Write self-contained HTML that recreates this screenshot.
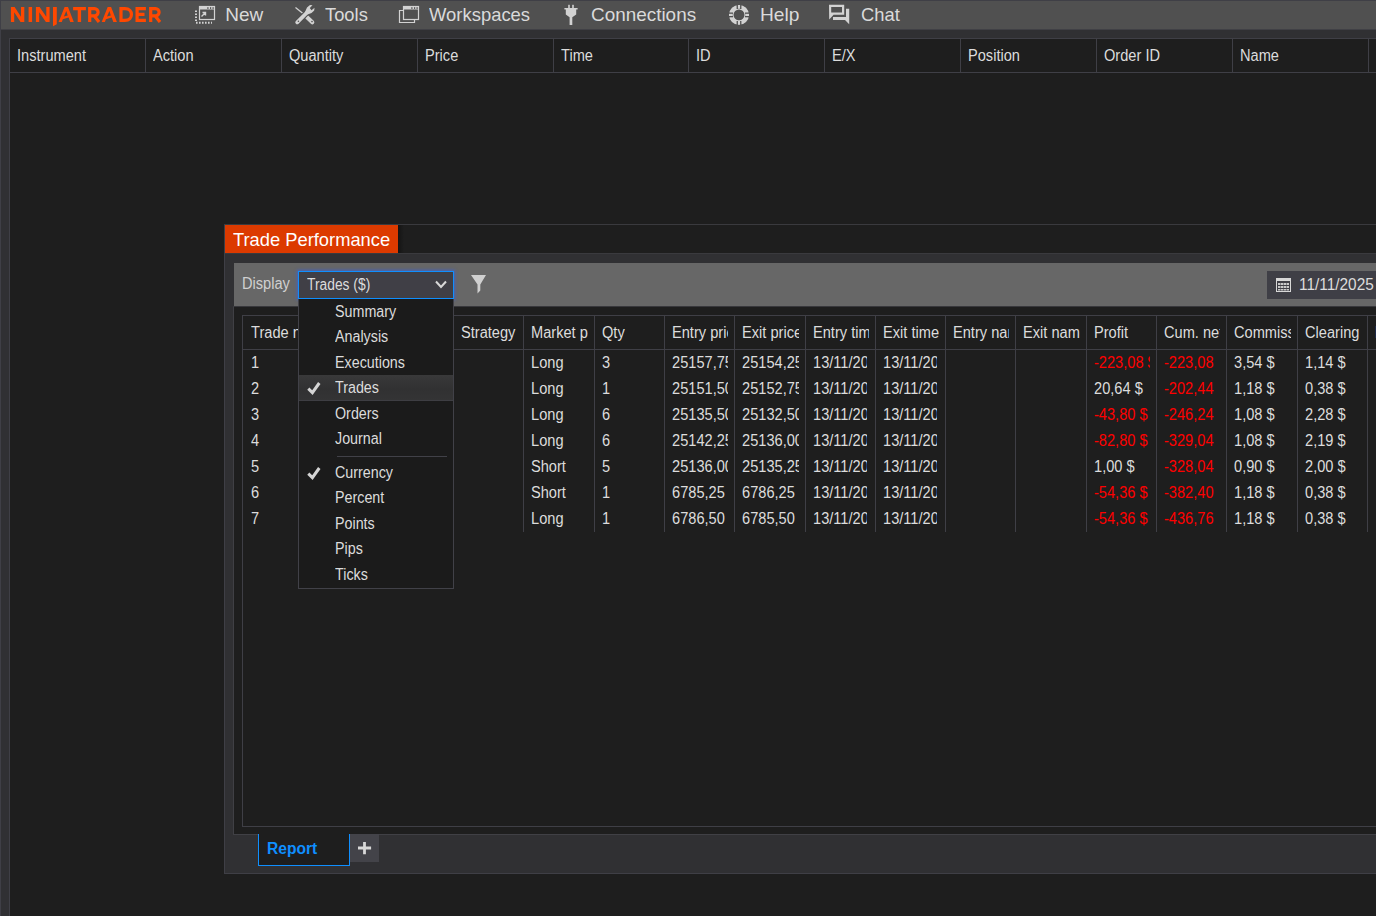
<!DOCTYPE html>
<html><head><meta charset="utf-8">
<style>
*{margin:0;padding:0;box-sizing:border-box}
html,body{width:1376px;height:916px;overflow:hidden;background:#1e1e1e;font-family:"Liberation Sans",sans-serif;color:#dcdcdc;position:relative}
.a{position:absolute}
.t{position:absolute;white-space:nowrap;line-height:1}
svg{display:block}
</style></head><body>
<div class="a" style="left:0px;top:0px;width:10px;height:916px;background:#303033;border-left:1px solid #3f3f46"></div>
<div class="a" style="left:9px;top:38px;width:1px;height:878px;background:#3f3f46"></div>
<div class="a" style="left:10px;top:30px;width:1366px;height:8px;background:#303033"></div>
<div class="a" style="left:0px;top:0px;width:1376px;height:30px;background:#505050;border-top:1px solid #3f3f46;border-left:1px solid #3f3f46;border-bottom:1px solid #404045"></div>
  <svg class="a" style="left:0;top:0" width="180" height="30" viewBox="0 0 180 30">
   <g fill="none" stroke="#ff4800" stroke-width="3.2" stroke-linejoin="miter">
    <path d="M121 8.6 H125 C133.6 8.6 133.6 20.4 125 20.4 H121 Z"/>
    <path d="M145.9 8.6 H137.1 V20.4 H145.9 M137.1 14.4 H144.5"/>
    <path d="M89.7 22 V8.6 H94.5 A3.6 3.6 0 0 1 94.5 15.8 H89.7 M94 15.8 L99 22"/>
    <path d="M150.7 22 V8.6 H155.5 A3.6 3.6 0 0 1 155.5 15.8 H150.7 M155 15.8 L160 22"/>
   </g>
   <g fill="#ff4800">
    <rect x="28.6" y="7" width="3.5" height="15"/>
    <path d="M10.9 7 H14.6 L21 16.8 V7 H24.3 V22 H20.6 L14.2 12.2 V22 H10.9 Z"/>
    <path d="M35.9 7 H39.6 L46.3 16.8 V7 H49.6 V22 H45.9 L39.2 12.2 V22 H35.9 Z"/>
    <path d="M53 7 H56.8 V24.2 L53 26.2 Z"/>
    <path d="M73.1 7 H85.9 V10.2 H81.1 V22 H77.7 V10.2 H73.1 Z"/>
    <path d="M64.6 7 H68 L73.8 22 H70.2 L68.6 17.5 L62.8 19.2 L61.8 22 H58.6 Z M66.3 11 L63.9 16.6 L67.7 15.4 Z"/>
    <path d="M107.7 7 H111.1 L116.9 22 H113.3 L111.7 17.5 L105.9 19.2 L104.9 22 H101.7 Z M109.4 11 L107 16.6 L110.8 15.4 Z"/>
   </g>
  </svg>
  <svg class="a" style="left:0;top:0" width="900" height="30" viewBox="0 0 900 30">
   <g fill="none" stroke="#d2d2d2">
    <!-- New -->
    <rect x="199.5" y="6.5" width="15" height="13" stroke-width="1.2"/>
    <path d="M196 10.5 V21.5 M196 22.8 H212" stroke-width="2" stroke-dasharray="1.6 1.4"/>
    <path d="M201.5 16.5 L205.5 12.5 M202.5 12.5 H205.5 V15.5" stroke-width="1.4"/>
    <!-- Workspaces -->
    <rect x="403.5" y="6.5" width="15" height="13" stroke-width="1.2"/>
    <path d="M403.5 10.5 H399.5 V22.5 H414.5 V19.5" stroke-width="1.2"/>
    <!-- Tools -->
    <path d="M295.5 7.5 L303 13.5" stroke-width="1.3"/>
    <path d="M306.8 17 L312.3 22.3" stroke-width="4" stroke-linecap="round"/>
    <path d="M297.2 22.3 L306.5 13" stroke="#505050" stroke-width="6"/>
    <path d="M297.2 22.3 L306.5 13" stroke-width="3.8" stroke-linecap="round"/>
    <!-- Chat -->
    <!-- Help -->
    <circle cx="739" cy="14.9" r="7.7" stroke-width="4.5"/>
   </g>
   <g fill="#d2d2d2">
    <rect x="199.5" y="6.5" width="15" height="3"/>
    <rect x="403.5" y="6.5" width="15" height="3"/>
    <path d="M305 12 L307 7.5 L310 5 L312.5 5.3 L309.8 8 L311.5 10.3 L314.5 7.8 L314.2 10.5 L311.5 13 L307.5 14.5 Z"/>
    <path fill-rule="evenodd" d="M829 4.8 H844.2 V14.8 H833.6 L829.2 19.4 Z M831.2 7 V12.6 H842 V7 Z"/>
    <path d="M846 8.8 H849.2 V24.2 L845 19.9 H833 V17 H846 Z"/>
    <!-- plug -->
    <rect x="568.2" y="4.8" width="1.6" height="3.6"/>
    <rect x="572.2" y="4.8" width="1.6" height="3.6"/>
    <path d="M564.4 8 H577.6 V9.6 H576.2 V14.5 L572.3 17.2 V25 H569.6 V17.2 L565.8 14.5 V9.6 H564.4 Z"/>
   </g>
   <g fill="#505050">
    <rect x="736.6" y="4" width="4.8" height="5"/><rect x="736.6" y="21" width="4.8" height="5"/>
    <rect x="728" y="12.5" width="5" height="4.8"/><rect x="745" y="12.5" width="5" height="4.8"/>
    <rect x="207.3" y="7.2" width="1.2" height="1.7"/><rect x="210" y="7.2" width="1.2" height="1.7"/><rect x="212.5" y="7.2" width="1.2" height="1.7"/>
    <rect x="411.3" y="7.2" width="1.2" height="1.7"/><rect x="414" y="7.2" width="1.2" height="1.7"/><rect x="416.5" y="7.2" width="1.2" height="1.7"/>
    <circle cx="298.4" cy="21.2" r="0.8"/><circle cx="312" cy="21.6" r="0.8"/>
   </g>
   <g fill="#d2d2d2">
    <rect x="737.9" y="5" width="2.2" height="3.8"/><rect x="737.9" y="21" width="2.2" height="3.8"/>
    <rect x="729" y="13.8" width="3.8" height="2.2"/><rect x="745.2" y="13.8" width="3.8" height="2.2"/>
   </g>
  </svg>

<div class="t" style="left:225.3px;top:5.0px;font-size:19px;color:#dadada;transform:scaleX(1.0);transform-origin:0 0">New</div>
<div class="t" style="left:324.5px;top:5.0px;font-size:19px;color:#dadada;transform:scaleX(0.965);transform-origin:0 0">Tools</div>
<div class="t" style="left:428.7px;top:5.0px;font-size:19px;color:#dadada;transform:scaleX(0.97);transform-origin:0 0">Workspaces</div>
<div class="t" style="left:590.5px;top:5.0px;font-size:19px;color:#dadada;transform:scaleX(0.995);transform-origin:0 0">Connections</div>
<div class="t" style="left:759.5px;top:5.0px;font-size:19px;color:#dadada;transform:scaleX(1.01);transform-origin:0 0">Help</div>
<div class="t" style="left:860.5px;top:5.0px;font-size:19px;color:#dadada;transform:scaleX(0.967);transform-origin:0 0">Chat</div>
<div class="a" style="left:10px;top:38px;width:1366px;height:1px;background:#3f3f46"></div>
<div class="a" style="left:10px;top:72px;width:1366px;height:1px;background:#3f3f46"></div>
<div class="t" style="left:17px;top:47.6px;font-size:15.8px;color:#dcdcdc;transform:scaleX(0.925);transform-origin:0 0">Instrument</div>
<div class="a" style="left:145px;top:39px;width:1px;height:33px;background:#3f3f46"></div>
<div class="t" style="left:153px;top:47.6px;font-size:15.8px;color:#dcdcdc;transform:scaleX(0.925);transform-origin:0 0">Action</div>
<div class="a" style="left:281px;top:39px;width:1px;height:33px;background:#3f3f46"></div>
<div class="t" style="left:289px;top:47.6px;font-size:15.8px;color:#dcdcdc;transform:scaleX(0.925);transform-origin:0 0">Quantity</div>
<div class="a" style="left:417px;top:39px;width:1px;height:33px;background:#3f3f46"></div>
<div class="t" style="left:425px;top:47.6px;font-size:15.8px;color:#dcdcdc;transform:scaleX(0.925);transform-origin:0 0">Price</div>
<div class="a" style="left:553px;top:39px;width:1px;height:33px;background:#3f3f46"></div>
<div class="t" style="left:561px;top:47.6px;font-size:15.8px;color:#dcdcdc;transform:scaleX(0.925);transform-origin:0 0">Time</div>
<div class="a" style="left:688px;top:39px;width:1px;height:33px;background:#3f3f46"></div>
<div class="t" style="left:696px;top:47.6px;font-size:15.8px;color:#dcdcdc;transform:scaleX(0.925);transform-origin:0 0">ID</div>
<div class="a" style="left:824px;top:39px;width:1px;height:33px;background:#3f3f46"></div>
<div class="t" style="left:832px;top:47.6px;font-size:15.8px;color:#dcdcdc;transform:scaleX(0.925);transform-origin:0 0">E/X</div>
<div class="a" style="left:960px;top:39px;width:1px;height:33px;background:#3f3f46"></div>
<div class="t" style="left:968px;top:47.6px;font-size:15.8px;color:#dcdcdc;transform:scaleX(0.925);transform-origin:0 0">Position</div>
<div class="a" style="left:1096px;top:39px;width:1px;height:33px;background:#3f3f46"></div>
<div class="t" style="left:1104px;top:47.6px;font-size:15.8px;color:#dcdcdc;transform:scaleX(0.925);transform-origin:0 0">Order ID</div>
<div class="a" style="left:1232px;top:39px;width:1px;height:33px;background:#3f3f46"></div>
<div class="t" style="left:1240px;top:47.6px;font-size:15.8px;color:#dcdcdc;transform:scaleX(0.925);transform-origin:0 0">Name</div>
<div class="a" style="left:1368px;top:39px;width:1px;height:33px;background:#3f3f46"></div>
<div class="a" style="left:224px;top:224px;width:1152px;height:650px;border-left:1px solid #3f3f46;border-top:1px solid #3a3a3e;border-bottom:1px solid #3f3f46;background:#1e1e1e"></div>
<div class="a" style="left:225px;top:225px;width:173px;height:28px;background:#dc3a00"></div>
<div class="a" style="left:398px;top:225px;width:6px;height:28px;background:linear-gradient(90deg,rgba(0,0,0,.35),rgba(0,0,0,0))"></div>
<div class="t" style="left:233px;top:231.25px;font-size:18.5px;color:#ffffff;transform:scaleX(0.99);transform-origin:0 0">Trade Performance</div>
<div class="a" style="left:225px;top:253px;width:1151px;height:620px;background:#303033;border-top:1px solid #3a3a3e"></div>
<div class="a" style="left:234px;top:263px;width:1142px;height:43px;background:#676767"></div>
<div class="a" style="left:233px;top:306px;width:1143px;height:529px;background:#1e1e1e;border-left:1px solid #404045;border-top:1px solid #38383c;border-bottom:1px solid #404045"></div>
<div class="a" style="left:242px;top:315px;width:1134px;height:512px;border-left:1px solid #3f3f46;border-top:1px solid #3f3f46;border-bottom:1px solid #3f3f46"></div>
<div class="a" style="left:243px;top:349px;width:1133px;height:1px;background:#3f3f46"></div>
<div class="a" style="left:251px;top:318px;width:56px;height:26px;overflow:hidden"><div class="t" style="left:0;top:6.6px;font-size:15.8px;color:#dcdcdc;transform:scaleX(0.925);transform-origin:0 0">Trade number</div></div>
<div class="a" style="left:312px;top:316px;width:1px;height:216px;background:#3f3f46"></div>
<div class="a" style="left:251px;top:350px;width:56px;height:26px;overflow:hidden"><div class="t" style="left:0;top:4.6px;font-size:15.8px;color:#dcdcdc;transform:scaleX(0.925);transform-origin:0 0">1</div></div>
<div class="a" style="left:251px;top:376px;width:56px;height:26px;overflow:hidden"><div class="t" style="left:0;top:4.6px;font-size:15.8px;color:#dcdcdc;transform:scaleX(0.925);transform-origin:0 0">2</div></div>
<div class="a" style="left:251px;top:402px;width:56px;height:26px;overflow:hidden"><div class="t" style="left:0;top:4.6px;font-size:15.8px;color:#dcdcdc;transform:scaleX(0.925);transform-origin:0 0">3</div></div>
<div class="a" style="left:251px;top:428px;width:56px;height:26px;overflow:hidden"><div class="t" style="left:0;top:4.6px;font-size:15.8px;color:#dcdcdc;transform:scaleX(0.925);transform-origin:0 0">4</div></div>
<div class="a" style="left:251px;top:454px;width:56px;height:26px;overflow:hidden"><div class="t" style="left:0;top:4.6px;font-size:15.8px;color:#dcdcdc;transform:scaleX(0.925);transform-origin:0 0">5</div></div>
<div class="a" style="left:251px;top:480px;width:56px;height:26px;overflow:hidden"><div class="t" style="left:0;top:4.6px;font-size:15.8px;color:#dcdcdc;transform:scaleX(0.925);transform-origin:0 0">6</div></div>
<div class="a" style="left:251px;top:506px;width:56px;height:26px;overflow:hidden"><div class="t" style="left:0;top:4.6px;font-size:15.8px;color:#dcdcdc;transform:scaleX(0.925);transform-origin:0 0">7</div></div>
<div class="a" style="left:320px;top:318px;width:57px;height:26px;overflow:hidden"><div class="t" style="left:0;top:6.6px;font-size:15.8px;color:#dcdcdc;transform:scaleX(0.925);transform-origin:0 0">Instrument</div></div>
<div class="a" style="left:383px;top:316px;width:1px;height:216px;background:#3f3f46"></div>
<div class="a" style="left:391px;top:318px;width:56px;height:26px;overflow:hidden"><div class="t" style="left:0;top:6.6px;font-size:15.8px;color:#dcdcdc;transform:scaleX(0.925);transform-origin:0 0">Account</div></div>
<div class="a" style="left:453px;top:316px;width:1px;height:216px;background:#3f3f46"></div>
<div class="a" style="left:461px;top:318px;width:56px;height:26px;overflow:hidden"><div class="t" style="left:0;top:6.6px;font-size:15.8px;color:#dcdcdc;transform:scaleX(0.925);transform-origin:0 0">Strategy</div></div>
<div class="a" style="left:523px;top:316px;width:1px;height:216px;background:#3f3f46"></div>
<div class="a" style="left:531px;top:318px;width:57px;height:26px;overflow:hidden"><div class="t" style="left:0;top:6.6px;font-size:15.8px;color:#dcdcdc;transform:scaleX(0.925);transform-origin:0 0">Market position</div></div>
<div class="a" style="left:594px;top:316px;width:1px;height:216px;background:#3f3f46"></div>
<div class="a" style="left:531px;top:350px;width:57px;height:26px;overflow:hidden"><div class="t" style="left:0;top:4.6px;font-size:15.8px;color:#dcdcdc;transform:scaleX(0.925);transform-origin:0 0">Long</div></div>
<div class="a" style="left:531px;top:376px;width:57px;height:26px;overflow:hidden"><div class="t" style="left:0;top:4.6px;font-size:15.8px;color:#dcdcdc;transform:scaleX(0.925);transform-origin:0 0">Long</div></div>
<div class="a" style="left:531px;top:402px;width:57px;height:26px;overflow:hidden"><div class="t" style="left:0;top:4.6px;font-size:15.8px;color:#dcdcdc;transform:scaleX(0.925);transform-origin:0 0">Long</div></div>
<div class="a" style="left:531px;top:428px;width:57px;height:26px;overflow:hidden"><div class="t" style="left:0;top:4.6px;font-size:15.8px;color:#dcdcdc;transform:scaleX(0.925);transform-origin:0 0">Long</div></div>
<div class="a" style="left:531px;top:454px;width:57px;height:26px;overflow:hidden"><div class="t" style="left:0;top:4.6px;font-size:15.8px;color:#dcdcdc;transform:scaleX(0.925);transform-origin:0 0">Short</div></div>
<div class="a" style="left:531px;top:480px;width:57px;height:26px;overflow:hidden"><div class="t" style="left:0;top:4.6px;font-size:15.8px;color:#dcdcdc;transform:scaleX(0.925);transform-origin:0 0">Short</div></div>
<div class="a" style="left:531px;top:506px;width:57px;height:26px;overflow:hidden"><div class="t" style="left:0;top:4.6px;font-size:15.8px;color:#dcdcdc;transform:scaleX(0.925);transform-origin:0 0">Long</div></div>
<div class="a" style="left:602px;top:318px;width:56px;height:26px;overflow:hidden"><div class="t" style="left:0;top:6.6px;font-size:15.8px;color:#dcdcdc;transform:scaleX(0.925);transform-origin:0 0">Qty</div></div>
<div class="a" style="left:664px;top:316px;width:1px;height:216px;background:#3f3f46"></div>
<div class="a" style="left:602px;top:350px;width:56px;height:26px;overflow:hidden"><div class="t" style="left:0;top:4.6px;font-size:15.8px;color:#dcdcdc;transform:scaleX(0.925);transform-origin:0 0">3</div></div>
<div class="a" style="left:602px;top:376px;width:56px;height:26px;overflow:hidden"><div class="t" style="left:0;top:4.6px;font-size:15.8px;color:#dcdcdc;transform:scaleX(0.925);transform-origin:0 0">1</div></div>
<div class="a" style="left:602px;top:402px;width:56px;height:26px;overflow:hidden"><div class="t" style="left:0;top:4.6px;font-size:15.8px;color:#dcdcdc;transform:scaleX(0.925);transform-origin:0 0">6</div></div>
<div class="a" style="left:602px;top:428px;width:56px;height:26px;overflow:hidden"><div class="t" style="left:0;top:4.6px;font-size:15.8px;color:#dcdcdc;transform:scaleX(0.925);transform-origin:0 0">6</div></div>
<div class="a" style="left:602px;top:454px;width:56px;height:26px;overflow:hidden"><div class="t" style="left:0;top:4.6px;font-size:15.8px;color:#dcdcdc;transform:scaleX(0.925);transform-origin:0 0">5</div></div>
<div class="a" style="left:602px;top:480px;width:56px;height:26px;overflow:hidden"><div class="t" style="left:0;top:4.6px;font-size:15.8px;color:#dcdcdc;transform:scaleX(0.925);transform-origin:0 0">1</div></div>
<div class="a" style="left:602px;top:506px;width:56px;height:26px;overflow:hidden"><div class="t" style="left:0;top:4.6px;font-size:15.8px;color:#dcdcdc;transform:scaleX(0.925);transform-origin:0 0">1</div></div>
<div class="a" style="left:672px;top:318px;width:56px;height:26px;overflow:hidden"><div class="t" style="left:0;top:6.6px;font-size:15.8px;color:#dcdcdc;transform:scaleX(0.925);transform-origin:0 0">Entry price</div></div>
<div class="a" style="left:734px;top:316px;width:1px;height:216px;background:#3f3f46"></div>
<div class="a" style="left:672px;top:350px;width:56px;height:26px;overflow:hidden"><div class="t" style="left:0;top:4.6px;font-size:15.8px;color:#dcdcdc;transform:scaleX(0.925);transform-origin:0 0">25157,75</div></div>
<div class="a" style="left:672px;top:376px;width:56px;height:26px;overflow:hidden"><div class="t" style="left:0;top:4.6px;font-size:15.8px;color:#dcdcdc;transform:scaleX(0.925);transform-origin:0 0">25151,50</div></div>
<div class="a" style="left:672px;top:402px;width:56px;height:26px;overflow:hidden"><div class="t" style="left:0;top:4.6px;font-size:15.8px;color:#dcdcdc;transform:scaleX(0.925);transform-origin:0 0">25135,50</div></div>
<div class="a" style="left:672px;top:428px;width:56px;height:26px;overflow:hidden"><div class="t" style="left:0;top:4.6px;font-size:15.8px;color:#dcdcdc;transform:scaleX(0.925);transform-origin:0 0">25142,25</div></div>
<div class="a" style="left:672px;top:454px;width:56px;height:26px;overflow:hidden"><div class="t" style="left:0;top:4.6px;font-size:15.8px;color:#dcdcdc;transform:scaleX(0.925);transform-origin:0 0">25136,00</div></div>
<div class="a" style="left:672px;top:480px;width:56px;height:26px;overflow:hidden"><div class="t" style="left:0;top:4.6px;font-size:15.8px;color:#dcdcdc;transform:scaleX(0.925);transform-origin:0 0">6785,25</div></div>
<div class="a" style="left:672px;top:506px;width:56px;height:26px;overflow:hidden"><div class="t" style="left:0;top:4.6px;font-size:15.8px;color:#dcdcdc;transform:scaleX(0.925);transform-origin:0 0">6786,50</div></div>
<div class="a" style="left:742px;top:318px;width:57px;height:26px;overflow:hidden"><div class="t" style="left:0;top:6.6px;font-size:15.8px;color:#dcdcdc;transform:scaleX(0.925);transform-origin:0 0">Exit price</div></div>
<div class="a" style="left:805px;top:316px;width:1px;height:216px;background:#3f3f46"></div>
<div class="a" style="left:742px;top:350px;width:57px;height:26px;overflow:hidden"><div class="t" style="left:0;top:4.6px;font-size:15.8px;color:#dcdcdc;transform:scaleX(0.925);transform-origin:0 0">25154,25</div></div>
<div class="a" style="left:742px;top:376px;width:57px;height:26px;overflow:hidden"><div class="t" style="left:0;top:4.6px;font-size:15.8px;color:#dcdcdc;transform:scaleX(0.925);transform-origin:0 0">25152,75</div></div>
<div class="a" style="left:742px;top:402px;width:57px;height:26px;overflow:hidden"><div class="t" style="left:0;top:4.6px;font-size:15.8px;color:#dcdcdc;transform:scaleX(0.925);transform-origin:0 0">25132,50</div></div>
<div class="a" style="left:742px;top:428px;width:57px;height:26px;overflow:hidden"><div class="t" style="left:0;top:4.6px;font-size:15.8px;color:#dcdcdc;transform:scaleX(0.925);transform-origin:0 0">25136,00</div></div>
<div class="a" style="left:742px;top:454px;width:57px;height:26px;overflow:hidden"><div class="t" style="left:0;top:4.6px;font-size:15.8px;color:#dcdcdc;transform:scaleX(0.925);transform-origin:0 0">25135,25</div></div>
<div class="a" style="left:742px;top:480px;width:57px;height:26px;overflow:hidden"><div class="t" style="left:0;top:4.6px;font-size:15.8px;color:#dcdcdc;transform:scaleX(0.925);transform-origin:0 0">6786,25</div></div>
<div class="a" style="left:742px;top:506px;width:57px;height:26px;overflow:hidden"><div class="t" style="left:0;top:4.6px;font-size:15.8px;color:#dcdcdc;transform:scaleX(0.925);transform-origin:0 0">6785,50</div></div>
<div class="a" style="left:813px;top:318px;width:56px;height:26px;overflow:hidden"><div class="t" style="left:0;top:6.6px;font-size:15.8px;color:#dcdcdc;transform:scaleX(0.925);transform-origin:0 0">Entry time</div></div>
<div class="a" style="left:875px;top:316px;width:1px;height:216px;background:#3f3f46"></div>
<div class="a" style="left:813px;top:350px;width:54px;height:26px;overflow:hidden"><div class="t" style="left:0;top:4.6px;font-size:15.8px;color:#dcdcdc;transform:scaleX(0.925);transform-origin:0 0">13/11/2025</div></div>
<div class="a" style="left:813px;top:376px;width:54px;height:26px;overflow:hidden"><div class="t" style="left:0;top:4.6px;font-size:15.8px;color:#dcdcdc;transform:scaleX(0.925);transform-origin:0 0">13/11/2025</div></div>
<div class="a" style="left:813px;top:402px;width:54px;height:26px;overflow:hidden"><div class="t" style="left:0;top:4.6px;font-size:15.8px;color:#dcdcdc;transform:scaleX(0.925);transform-origin:0 0">13/11/2025</div></div>
<div class="a" style="left:813px;top:428px;width:54px;height:26px;overflow:hidden"><div class="t" style="left:0;top:4.6px;font-size:15.8px;color:#dcdcdc;transform:scaleX(0.925);transform-origin:0 0">13/11/2025</div></div>
<div class="a" style="left:813px;top:454px;width:54px;height:26px;overflow:hidden"><div class="t" style="left:0;top:4.6px;font-size:15.8px;color:#dcdcdc;transform:scaleX(0.925);transform-origin:0 0">13/11/2025</div></div>
<div class="a" style="left:813px;top:480px;width:54px;height:26px;overflow:hidden"><div class="t" style="left:0;top:4.6px;font-size:15.8px;color:#dcdcdc;transform:scaleX(0.925);transform-origin:0 0">13/11/2025</div></div>
<div class="a" style="left:813px;top:506px;width:54px;height:26px;overflow:hidden"><div class="t" style="left:0;top:4.6px;font-size:15.8px;color:#dcdcdc;transform:scaleX(0.925);transform-origin:0 0">13/11/2025</div></div>
<div class="a" style="left:883px;top:318px;width:56px;height:26px;overflow:hidden"><div class="t" style="left:0;top:6.6px;font-size:15.8px;color:#dcdcdc;transform:scaleX(0.925);transform-origin:0 0">Exit time</div></div>
<div class="a" style="left:945px;top:316px;width:1px;height:216px;background:#3f3f46"></div>
<div class="a" style="left:883px;top:350px;width:54px;height:26px;overflow:hidden"><div class="t" style="left:0;top:4.6px;font-size:15.8px;color:#dcdcdc;transform:scaleX(0.925);transform-origin:0 0">13/11/2025</div></div>
<div class="a" style="left:883px;top:376px;width:54px;height:26px;overflow:hidden"><div class="t" style="left:0;top:4.6px;font-size:15.8px;color:#dcdcdc;transform:scaleX(0.925);transform-origin:0 0">13/11/2025</div></div>
<div class="a" style="left:883px;top:402px;width:54px;height:26px;overflow:hidden"><div class="t" style="left:0;top:4.6px;font-size:15.8px;color:#dcdcdc;transform:scaleX(0.925);transform-origin:0 0">13/11/2025</div></div>
<div class="a" style="left:883px;top:428px;width:54px;height:26px;overflow:hidden"><div class="t" style="left:0;top:4.6px;font-size:15.8px;color:#dcdcdc;transform:scaleX(0.925);transform-origin:0 0">13/11/2025</div></div>
<div class="a" style="left:883px;top:454px;width:54px;height:26px;overflow:hidden"><div class="t" style="left:0;top:4.6px;font-size:15.8px;color:#dcdcdc;transform:scaleX(0.925);transform-origin:0 0">13/11/2025</div></div>
<div class="a" style="left:883px;top:480px;width:54px;height:26px;overflow:hidden"><div class="t" style="left:0;top:4.6px;font-size:15.8px;color:#dcdcdc;transform:scaleX(0.925);transform-origin:0 0">13/11/2025</div></div>
<div class="a" style="left:883px;top:506px;width:54px;height:26px;overflow:hidden"><div class="t" style="left:0;top:4.6px;font-size:15.8px;color:#dcdcdc;transform:scaleX(0.925);transform-origin:0 0">13/11/2025</div></div>
<div class="a" style="left:953px;top:318px;width:56px;height:26px;overflow:hidden"><div class="t" style="left:0;top:6.6px;font-size:15.8px;color:#dcdcdc;transform:scaleX(0.925);transform-origin:0 0">Entry name</div></div>
<div class="a" style="left:1015px;top:316px;width:1px;height:216px;background:#3f3f46"></div>
<div class="a" style="left:1023px;top:318px;width:57px;height:26px;overflow:hidden"><div class="t" style="left:0;top:6.6px;font-size:15.8px;color:#dcdcdc;transform:scaleX(0.925);transform-origin:0 0">Exit name</div></div>
<div class="a" style="left:1086px;top:316px;width:1px;height:216px;background:#3f3f46"></div>
<div class="a" style="left:1094px;top:318px;width:56px;height:26px;overflow:hidden"><div class="t" style="left:0;top:6.6px;font-size:15.8px;color:#dcdcdc;transform:scaleX(0.925);transform-origin:0 0">Profit</div></div>
<div class="a" style="left:1156px;top:316px;width:1px;height:216px;background:#3f3f46"></div>
<div class="a" style="left:1094px;top:350px;width:56px;height:26px;overflow:hidden"><div class="t" style="left:0;top:4.6px;font-size:15.8px;color:#ff0000;transform:scaleX(0.925);transform-origin:0 0">-223,08 $</div></div>
<div class="a" style="left:1094px;top:376px;width:56px;height:26px;overflow:hidden"><div class="t" style="left:0;top:4.6px;font-size:15.8px;color:#dcdcdc;transform:scaleX(0.925);transform-origin:0 0">20,64 $</div></div>
<div class="a" style="left:1094px;top:402px;width:56px;height:26px;overflow:hidden"><div class="t" style="left:0;top:4.6px;font-size:15.8px;color:#ff0000;transform:scaleX(0.925);transform-origin:0 0">-43,80 $</div></div>
<div class="a" style="left:1094px;top:428px;width:56px;height:26px;overflow:hidden"><div class="t" style="left:0;top:4.6px;font-size:15.8px;color:#ff0000;transform:scaleX(0.925);transform-origin:0 0">-82,80 $</div></div>
<div class="a" style="left:1094px;top:454px;width:56px;height:26px;overflow:hidden"><div class="t" style="left:0;top:4.6px;font-size:15.8px;color:#dcdcdc;transform:scaleX(0.925);transform-origin:0 0">1,00 $</div></div>
<div class="a" style="left:1094px;top:480px;width:56px;height:26px;overflow:hidden"><div class="t" style="left:0;top:4.6px;font-size:15.8px;color:#ff0000;transform:scaleX(0.925);transform-origin:0 0">-54,36 $</div></div>
<div class="a" style="left:1094px;top:506px;width:56px;height:26px;overflow:hidden"><div class="t" style="left:0;top:4.6px;font-size:15.8px;color:#ff0000;transform:scaleX(0.925);transform-origin:0 0">-54,36 $</div></div>
<div class="a" style="left:1164px;top:318px;width:56px;height:26px;overflow:hidden"><div class="t" style="left:0;top:6.6px;font-size:15.8px;color:#dcdcdc;transform:scaleX(0.925);transform-origin:0 0">Cum. net profit</div></div>
<div class="a" style="left:1226px;top:316px;width:1px;height:216px;background:#3f3f46"></div>
<div class="a" style="left:1164px;top:350px;width:53px;height:26px;overflow:hidden"><div class="t" style="left:0;top:4.6px;font-size:15.8px;color:#ff0000;transform:scaleX(0.925);transform-origin:0 0">-223,08 $</div></div>
<div class="a" style="left:1164px;top:376px;width:53px;height:26px;overflow:hidden"><div class="t" style="left:0;top:4.6px;font-size:15.8px;color:#ff0000;transform:scaleX(0.925);transform-origin:0 0">-202,44 $</div></div>
<div class="a" style="left:1164px;top:402px;width:53px;height:26px;overflow:hidden"><div class="t" style="left:0;top:4.6px;font-size:15.8px;color:#ff0000;transform:scaleX(0.925);transform-origin:0 0">-246,24 $</div></div>
<div class="a" style="left:1164px;top:428px;width:53px;height:26px;overflow:hidden"><div class="t" style="left:0;top:4.6px;font-size:15.8px;color:#ff0000;transform:scaleX(0.925);transform-origin:0 0">-329,04 $</div></div>
<div class="a" style="left:1164px;top:454px;width:53px;height:26px;overflow:hidden"><div class="t" style="left:0;top:4.6px;font-size:15.8px;color:#ff0000;transform:scaleX(0.925);transform-origin:0 0">-328,04 $</div></div>
<div class="a" style="left:1164px;top:480px;width:53px;height:26px;overflow:hidden"><div class="t" style="left:0;top:4.6px;font-size:15.8px;color:#ff0000;transform:scaleX(0.925);transform-origin:0 0">-382,40 $</div></div>
<div class="a" style="left:1164px;top:506px;width:53px;height:26px;overflow:hidden"><div class="t" style="left:0;top:4.6px;font-size:15.8px;color:#ff0000;transform:scaleX(0.925);transform-origin:0 0">-436,76 $</div></div>
<div class="a" style="left:1234px;top:318px;width:57px;height:26px;overflow:hidden"><div class="t" style="left:0;top:6.6px;font-size:15.8px;color:#dcdcdc;transform:scaleX(0.925);transform-origin:0 0">Commission</div></div>
<div class="a" style="left:1297px;top:316px;width:1px;height:216px;background:#3f3f46"></div>
<div class="a" style="left:1234px;top:350px;width:57px;height:26px;overflow:hidden"><div class="t" style="left:0;top:4.6px;font-size:15.8px;color:#dcdcdc;transform:scaleX(0.925);transform-origin:0 0">3,54 $</div></div>
<div class="a" style="left:1234px;top:376px;width:57px;height:26px;overflow:hidden"><div class="t" style="left:0;top:4.6px;font-size:15.8px;color:#dcdcdc;transform:scaleX(0.925);transform-origin:0 0">1,18 $</div></div>
<div class="a" style="left:1234px;top:402px;width:57px;height:26px;overflow:hidden"><div class="t" style="left:0;top:4.6px;font-size:15.8px;color:#dcdcdc;transform:scaleX(0.925);transform-origin:0 0">1,08 $</div></div>
<div class="a" style="left:1234px;top:428px;width:57px;height:26px;overflow:hidden"><div class="t" style="left:0;top:4.6px;font-size:15.8px;color:#dcdcdc;transform:scaleX(0.925);transform-origin:0 0">1,08 $</div></div>
<div class="a" style="left:1234px;top:454px;width:57px;height:26px;overflow:hidden"><div class="t" style="left:0;top:4.6px;font-size:15.8px;color:#dcdcdc;transform:scaleX(0.925);transform-origin:0 0">0,90 $</div></div>
<div class="a" style="left:1234px;top:480px;width:57px;height:26px;overflow:hidden"><div class="t" style="left:0;top:4.6px;font-size:15.8px;color:#dcdcdc;transform:scaleX(0.925);transform-origin:0 0">1,18 $</div></div>
<div class="a" style="left:1234px;top:506px;width:57px;height:26px;overflow:hidden"><div class="t" style="left:0;top:4.6px;font-size:15.8px;color:#dcdcdc;transform:scaleX(0.925);transform-origin:0 0">1,18 $</div></div>
<div class="a" style="left:1305px;top:318px;width:56px;height:26px;overflow:hidden"><div class="t" style="left:0;top:6.6px;font-size:15.8px;color:#dcdcdc;transform:scaleX(0.925);transform-origin:0 0">Clearing fee</div></div>
<div class="a" style="left:1367px;top:316px;width:1px;height:216px;background:#3f3f46"></div>
<div class="a" style="left:1305px;top:350px;width:56px;height:26px;overflow:hidden"><div class="t" style="left:0;top:4.6px;font-size:15.8px;color:#dcdcdc;transform:scaleX(0.925);transform-origin:0 0">1,14 $</div></div>
<div class="a" style="left:1305px;top:376px;width:56px;height:26px;overflow:hidden"><div class="t" style="left:0;top:4.6px;font-size:15.8px;color:#dcdcdc;transform:scaleX(0.925);transform-origin:0 0">0,38 $</div></div>
<div class="a" style="left:1305px;top:402px;width:56px;height:26px;overflow:hidden"><div class="t" style="left:0;top:4.6px;font-size:15.8px;color:#dcdcdc;transform:scaleX(0.925);transform-origin:0 0">2,28 $</div></div>
<div class="a" style="left:1305px;top:428px;width:56px;height:26px;overflow:hidden"><div class="t" style="left:0;top:4.6px;font-size:15.8px;color:#dcdcdc;transform:scaleX(0.925);transform-origin:0 0">2,19 $</div></div>
<div class="a" style="left:1305px;top:454px;width:56px;height:26px;overflow:hidden"><div class="t" style="left:0;top:4.6px;font-size:15.8px;color:#dcdcdc;transform:scaleX(0.925);transform-origin:0 0">2,00 $</div></div>
<div class="a" style="left:1305px;top:480px;width:56px;height:26px;overflow:hidden"><div class="t" style="left:0;top:4.6px;font-size:15.8px;color:#dcdcdc;transform:scaleX(0.925);transform-origin:0 0">0,38 $</div></div>
<div class="a" style="left:1305px;top:506px;width:56px;height:26px;overflow:hidden"><div class="t" style="left:0;top:4.6px;font-size:15.8px;color:#dcdcdc;transform:scaleX(0.925);transform-origin:0 0">0,38 $</div></div>
<div class="a" style="left:1375px;top:318px;width:56px;height:26px;overflow:hidden"><div class="t" style="left:0;top:6.6px;font-size:15.8px;color:#dcdcdc;transform:scaleX(0.925);transform-origin:0 0">Exchange fee</div></div>
<div class="a" style="left:1437px;top:316px;width:1px;height:216px;background:#3f3f46"></div>
<div class="a" style="left:258px;top:834px;width:92px;height:32px;border:1px solid #0f8fff;border-top:none;background:#1e1e1e"></div>
<div class="t" style="left:267px;top:840.7px;font-size:15.6px;color:#0f8fff;font-weight:bold">Report</div>
<div class="a" style="left:350px;top:834px;width:29px;height:28px;background:#434349"></div>
<svg class="a" style="left:350px;top:834px" width="29" height="28"><path d="M14.5 8 V20.2 M8 14 H21.1" stroke="#d8d8d8" stroke-width="2.8"/></svg>
<div class="t" style="left:242px;top:275.6px;font-size:15.8px;color:#d0d0d0;transform:scaleX(0.925);transform-origin:0 0">Display</div>
<div class="a" style="left:298px;top:271px;width:156px;height:28px;background:#403f46;border:1px solid #0f8fff;box-shadow:0 0 3px 1px rgba(50,95,235,.65)"></div>
<div class="t" style="left:307px;top:276.6px;font-size:15.8px;color:#dcdcdc;transform:scaleX(0.875);transform-origin:0 0">Trades ($)</div>
<svg class="a" style="left:430px;top:276px" width="20" height="18"><path d="M6 5.5 L11 11 L16 5.5" fill="none" stroke="#d8d8d8" stroke-width="2"/></svg>
<svg class="a" style="left:468px;top:272px" width="22" height="24"><path d="M3 3 H18 L12.3 12.5 V18.5 L9.5 21.5 V12.5 Z" fill="#d0d0d0"/></svg>
<div class="a" style="left:1267px;top:271px;width:109px;height:28px;background:#3f3f46"></div>
<svg class="a" style="left:1276px;top:278px" width="15" height="14"><rect x="0.5" y="0.5" width="14" height="13" fill="none" stroke="#d8d8d8"/><rect x="0" y="0" width="15" height="3" fill="#d8d8d8"/>
<g fill="#c8c8c8"><rect x="2" y="5" width="2.5" height="2"/><rect x="5" y="5" width="2.5" height="2"/><rect x="8" y="5" width="2.5" height="2"/><rect x="11" y="5" width="2" height="2"/>
<rect x="2" y="8" width="2.5" height="2"/><rect x="5" y="8" width="2.5" height="2"/><rect x="8" y="8" width="2.5" height="2"/><rect x="11" y="8" width="2" height="2"/>
<rect x="2" y="11" width="2.5" height="1.5"/><rect x="5" y="11" width="2.5" height="1.5"/><rect x="8" y="11" width="2.5" height="1.5"/><rect x="11" y="11" width="2" height="1.5"/></g></svg>
<div class="t" style="left:1299px;top:276.6px;font-size:15.8px;color:#dcdcdc;transform:scaleX(0.975);transform-origin:0 0">11/11/2025</div>
<div class="a" style="left:298px;top:299px;width:156px;height:290px;background:#1b1b1b;border:1px solid #414148;border-top:none"></div>
<div class="a" style="left:299px;top:375px;width:154px;height:25px;background:linear-gradient(#39393a,#313132 55%,#343435)"></div>
<div class="a" style="left:299px;top:400px;width:154px;height:1px;background:#3e3e43"></div>
<div class="a" style="left:337px;top:456px;width:110px;height:1px;background:#414148"></div>
<div class="t" style="left:335px;top:303.6px;font-size:15.8px;color:#dcdcdc;transform:scaleX(0.905);transform-origin:0 0">Summary</div>
<div class="t" style="left:335px;top:328.6px;font-size:15.8px;color:#dcdcdc;transform:scaleX(0.905);transform-origin:0 0">Analysis</div>
<div class="t" style="left:335px;top:354.6px;font-size:15.8px;color:#dcdcdc;transform:scaleX(0.905);transform-origin:0 0">Executions</div>
<div class="t" style="left:335px;top:379.6px;font-size:15.8px;color:#dcdcdc;transform:scaleX(0.905);transform-origin:0 0">Trades</div>
<div class="t" style="left:335px;top:405.6px;font-size:15.8px;color:#dcdcdc;transform:scaleX(0.905);transform-origin:0 0">Orders</div>
<div class="t" style="left:335px;top:430.6px;font-size:15.8px;color:#dcdcdc;transform:scaleX(0.905);transform-origin:0 0">Journal</div>
<div class="t" style="left:335px;top:464.6px;font-size:15.8px;color:#dcdcdc;transform:scaleX(0.905);transform-origin:0 0">Currency</div>
<div class="t" style="left:335px;top:489.6px;font-size:15.8px;color:#dcdcdc;transform:scaleX(0.905);transform-origin:0 0">Percent</div>
<div class="t" style="left:335px;top:515.6px;font-size:15.8px;color:#dcdcdc;transform:scaleX(0.905);transform-origin:0 0">Points</div>
<div class="t" style="left:335px;top:540.6px;font-size:15.8px;color:#dcdcdc;transform:scaleX(0.905);transform-origin:0 0">Pips</div>
<div class="t" style="left:335px;top:566.6px;font-size:15.8px;color:#dcdcdc;transform:scaleX(0.905);transform-origin:0 0">Ticks</div>
<svg class="a" style="left:306px;top:381px" width="16" height="15" viewBox="0 0 16 15"><path d="M2.3 7.6 L6.4 11.6 L13.3 2" fill="none" stroke="#d4d4d4" stroke-width="3"/></svg>
<svg class="a" style="left:306px;top:465.5px" width="16" height="15" viewBox="0 0 16 15"><path d="M2.3 7.6 L6.4 11.6 L13.3 2" fill="none" stroke="#d4d4d4" stroke-width="3"/></svg>
</body></html>
